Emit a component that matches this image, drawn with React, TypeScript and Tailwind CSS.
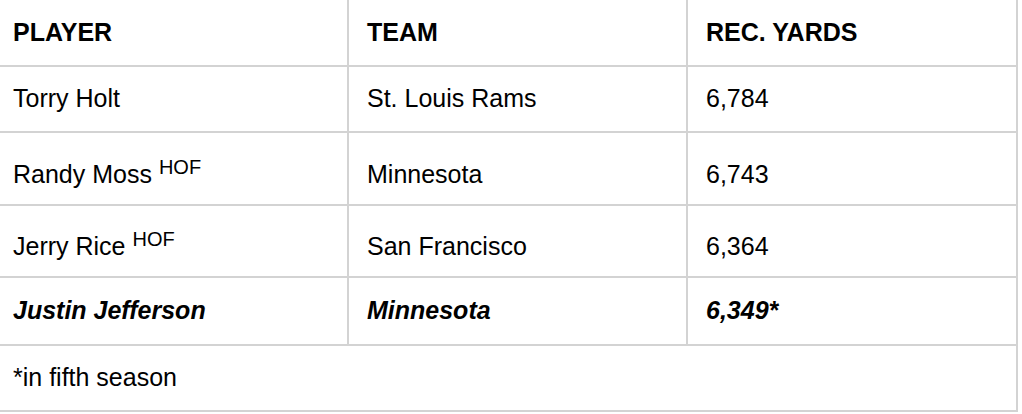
import React from 'react';

interface Row {
  player: string;
  hof?: boolean;
  team: string;
  yards: string;
  highlight?: boolean;
  height: string;
  pad: string;
}

const rows: Row[] = [
  { player: 'Torry Holt', team: 'St. Louis Rams', yards: '6,784', height: 'h-[66px]', pad: 'pt-0' },
  { player: 'Randy Moss', hof: true, team: 'Minnesota', yards: '6,743', height: 'h-[73px]', pad: 'pt-[12px]' },
  { player: 'Jerry Rice', hof: true, team: 'San Francisco', yards: '6,364', height: 'h-[72px]', pad: 'pt-[12px]' },
  { player: 'Justin Jefferson', team: 'Minnesota', yards: '6,349*', highlight: true, height: 'h-[68px]', pad: 'pt-0' },
];

const line = 'border-[#d3d3d3]';
const cols = 'grid grid-cols-[349px_339px_330px]';

const App: React.FC = () => {
  return (
    <div className="w-[1022px] h-[414px] bg-white overflow-hidden font-['Liberation_Sans',Arial,sans-serif] text-[25px] leading-[1.5] text-black">
      <div className="w-[1018px]">
        {/* header */}
        <div className={`${cols} h-[67px] border-b-2 ${line} font-bold`}>
          <div className={`flex items-center pl-[13px] border-r-2 ${line}`}>PLAYER</div>
          <div className={`flex items-center pl-[18px] border-r-2 ${line}`}>TEAM</div>
          <div className={`flex items-center pl-[18px] border-r-2 ${line}`}>REC. YARDS</div>
        </div>

        {rows.map((r) => (
          <div
            key={r.player}
            className={`${cols} ${r.height} border-b-2 ${line} ${r.highlight ? 'font-bold italic' : ''}`}
          >
            <div className={`flex items-center ${r.pad} pl-[13px] border-r-2 ${line}`}>
              <span>
                {r.player}
                {r.hof && (
                  <>
                    {' '}
                    <sup className="relative top-[-9px] text-[20px] leading-none">HOF</sup>
                  </>
                )}
              </span>
            </div>
            <div className={`flex items-center ${r.pad} pl-[18px] border-r-2 ${line}`}>{r.team}</div>
            <div className={`flex items-center ${r.pad} pl-[18px] border-r-2 ${line}`}>{r.yards}</div>
          </div>
        ))}

        {/* footnote */}
        <div className={`flex items-center h-[66px] pl-[13px] border-b-2 border-r-2 ${line}`}>
          *in fifth season
        </div>
      </div>
    </div>
  );
};

export default App;
